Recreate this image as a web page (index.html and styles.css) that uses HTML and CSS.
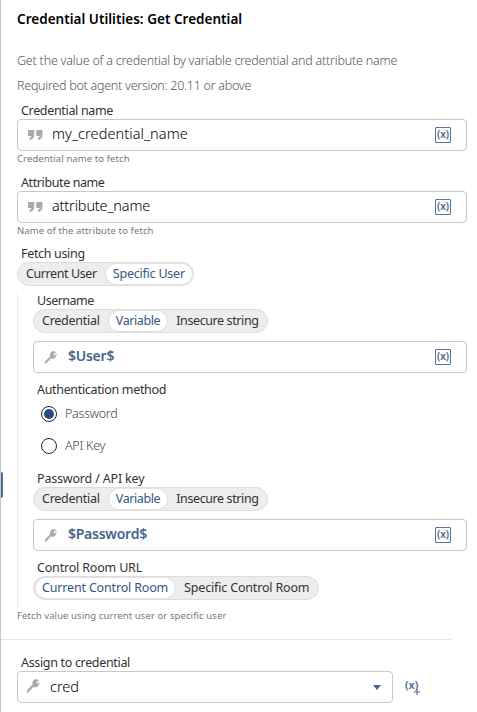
FILE: index.html
```html
<!DOCTYPE html>
<html lang="en">
<head>
<meta charset="utf-8">
<title>Credential Utilities: Get Credential</title>
<link rel="stylesheet" href="styles.css">
</head>
<body>
<svg width="0" height="0" class="defs" aria-hidden="true">
  <symbol id="quote" viewBox="0 0 15 12"><path d="M0 1h6.200v5c0 2.700-1.700 4.500-4.600 5.100V9C2.800 8.500 3.200 8 3.300 7H0zM8.300 1h6.200v5c0 2.700-1.700 4.500-4.600 5.100V9c1.200-.5 1.600-1 1.700-2H8.300z"/></symbol>
  <symbol id="key" viewBox="0 0 14 14"><path fill-rule="evenodd" d="M9.600 0a4.200 4.200 0 0 0-4 5.600L0 11.200v2.500h1.300v-1.400h1.800v-1.700h1.800V9.200l1.300-1.100A4.200 4.200 0 1 0 9.600 0zm1 2.200a1.200 1.200 0 1 1 0 2.400 1.200 1.200 0 0 1 0-2.400z"/></symbol>
</svg>
<main class="panel">
  <span class="handle"></span>
  <h1 class="title">Credential Utilities: Get Credential</h1>
  <p class="desc">Get the value of a credential by variable credential and attribute name</p>
  <p class="desc version">Required bot agent version: 20.11 or above</p>

  <label class="label l-cred">Credential name</label>
  <div class="field"><svg class="quote"><use href="#quote"/></svg><span class="value v-cred">my_credential_name</span><span class="var">(x)</span></div>
  <p class="help h-cred">Credential name to fetch</p>

  <label class="label l-attr">Attribute name</label>
  <div class="field"><svg class="quote"><use href="#quote"/></svg><span class="value v-attr">attribute_name</span><span class="var">(x)</span></div>
  <p class="help h-attr">Name of the attribute to fetch</p>

  <label class="label l-fetch">Fetch using</label>
  <div class="toggle t-user"><span>Current User</span><span class="on">Specific User</span></div>

  <section class="nested">
    <label class="label l-name">Username</label>
    <div class="toggle t-kind"><span>Credential</span><span class="on">Variable</span><span>Insecure string</span></div>
    <div class="field"><svg class="key"><use href="#key"/></svg><span class="value strong">$User$</span><span class="var">(x)</span></div>
    <label class="label l-auth">Authentication method</label>
    <div class="radio"><i class="dot checked"></i><span>Password</span></div>
    <div class="radio api"><i class="dot"></i><span>API Key</span></div>
    <label class="label l-pass">Password / API key</label>
    <div class="toggle t-kind"><span>Credential</span><span class="on">Variable</span><span>Insecure string</span></div>
    <div class="field"><svg class="key"><use href="#key"/></svg><span class="value strong">$Password$</span><span class="var">(x)</span></div>
    <label class="label l-url">Control Room URL</label>
    <div class="toggle t-room"><span class="on">Current Control Room</span><span>Specific Control Room</span></div>
  </section>
  <p class="help h-fetch">Fetch value using current user or specific user</p>

  <hr class="rule">
  <label class="label l-assign">Assign to credential</label>
  <div class="assign">
    <div class="field select"><svg class="key"><use href="#key"/></svg><span class="value">cred</span><i class="caret"></i></div>
    <span class="addvar">(x)<svg class="plus" viewBox="0 0 6 6"><path d="M3 0v6M0 3h6"/></svg></span>
  </div>
</main>
</body>
</html>
```
FILE: styles.css
```css
* { box-sizing: border-box; }
body { margin: 0; background: #fff; font-family: "Noto Sans", sans-serif; font-size: 12.5px; color: #333; white-space: nowrap; }
.defs { position: absolute; }
.panel { position: relative; width: 477px; height: 712px; padding: 9px 10px 0 16px; border-left: 1px solid #c6c6c6; overflow: hidden; }
.handle { position: absolute; left: -1px; top: 472px; width: 3px; height: 26px; background: #4b6a92; border-radius: 0 2px 2px 0; }
p, h1 { margin: 0; }
.title { height: 20px; line-height: 20px; font-size: 13.5px; font-weight: 600; color: #000; letter-spacing: 0.02px; }
.desc { height: 25px; margin-top: 19px; line-height: 25px; font-weight: 300; color: #555; letter-spacing: -0.21px; }
.version { margin-top: 0; letter-spacing: -0.26px; }
.label { display: block; height: 16px; margin-left: 4px; line-height: 16px; letter-spacing: -0.33px; }
.l-cred { margin-top: 5px; }
.field { display: flex; align-items: center; height: 32px; border: 1px solid #c8c8c8; border-radius: 4px; padding: 0 15px 0 10px; }
.quote { width: 15px; height: 12px; fill: #aaa; flex: none; }
.key { width: 14px; height: 14px; fill: #aaa; flex: none; }
.value { margin: -4px 0 0 9px; font-size: 14.5px; line-height: 20px; color: #000; font-weight: 300; }
.v-cred { letter-spacing: 0.08px; }
.v-attr { letter-spacing: -0.17px; }
.strong { font-weight: 600; color: #46658d; font-size: 14px; letter-spacing: -0.25px; }
.nested .key { margin-left: 1px; width: 13px; height: 13px; }
.nested .value { margin: -3px 0 0 10px; }
.var { margin-left: auto; width: 16px; height: 16px; border: 1px solid #56749a; border-radius: 1px; font-size: 10px; font-weight: 600; line-height: 13px; text-align: center; color: #46658d; }
.help { height: 16px; line-height: 15px; font-size: 9.5px; color: #777; letter-spacing: 0.1px; }
.l-attr { margin-top: 8px; letter-spacing: -0.4px; }
.l-fetch { margin-top: 7px; }
.toggle { display: flex; align-items: center; width: max-content; height: 24px; padding: 0 1.5px; border: 1px solid #ddd; border-radius: 12px; background: #ededed; }
.toggle span { height: 20px; line-height: 20px; padding: 0 9.5px; border-radius: 10px; letter-spacing: -0.4px; }
.toggle span:first-child { padding-left: 6.5px; }
.toggle span:last-child { padding-right: 7px; }
.toggle .on { padding: 0 6.5px; background: #fff; color: #345780; box-shadow: 0 0 1px 1px #e2e2e2; }
.t-user .on { letter-spacing: -0.22px; }
.t-kind span:first-child { letter-spacing: -0.25px; }
.t-room span { letter-spacing: -0.17px; }
.nested { height: 314px; margin-top: 8px; padding-left: 15px; border-left: 1px solid #e8e8e8; }
.l-name { height: 15px; line-height: 14px; letter-spacing: -0.5px; }
.t-kind { margin-bottom: 8px; }
.l-auth { margin-top: 9px; }
.radio { display: flex; align-items: center; height: 32px; padding-left: 8px; font-weight: 300; color: #444; letter-spacing: -0.25px; }
.radio span { margin-left: 8px; margin-top: -2px; }
.dot { width: 16px; height: 16px; border: 1px solid #222; border-radius: 50%; padding: 2px; }
.checked::before { content: ""; display: block; width: 10px; height: 10px; border-radius: 50%; background: #284f7d; }
.l-pass, .l-url { margin-top: 9px; letter-spacing: -0.18px; }
.rule { margin: 15px 16px 15px -16px; border: 0; border-top: 1px solid #e6e6e6; }
.l-assign { line-height: 15px; }
.assign { display: flex; }
.select { width: 376px; padding: 0 11px 0 9px; }
.select .key { margin-top: -3px; }
.select .value { margin-top: -2px; }
.caret { margin-left: auto; border: 4px solid transparent; border-top: 5px solid #46658d; border-bottom: 0; }
.addvar { position: relative; margin: 6px 0 0 12px; font-size: 11px; font-weight: 600; line-height: 16px; color: #46658d; }
.plus { position: absolute; right: -2px; top: 12px; width: 6px; height: 6px; stroke: #46658d; fill: none; }
```
